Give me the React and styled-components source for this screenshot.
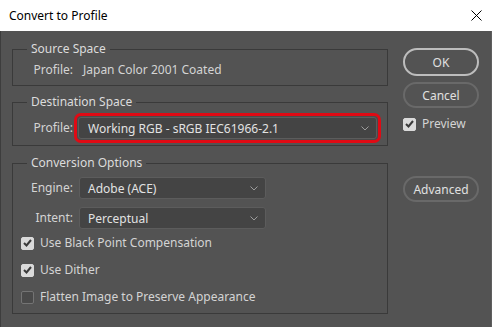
import styled, { createGlobalStyle } from "styled-components";

const GlobalStyle = createGlobalStyle`
  html, body {
    margin: 0;
    padding: 0;
    background: #fff;
  }
  body {
    font-family: "Noto Sans", "Open Sans", sans-serif;
    font-size: 12px;
  }
`;

const Window = styled.div`
  width: 492px;
  height: 327px;
  display: flex;
  flex-direction: column;
  overflow: hidden;
`;

const TitleBar = styled.div`
  height: 31px;
  flex: none;
  display: flex;
  align-items: center;
  justify-content: space-between;
  padding: 0 10px 0 9px;
  background: #fff;
  color: #000;
  font-size: 12px;
`;

const Body = styled.div`
  flex: 1;
  display: flex;
  background: #535353;
  border-left: 1px solid #3d3d3d;
  border-right: 1px solid #5f5f5f;
  padding: 10px 0 0 11px;
  color: #d4d4d4;
`;

const LeftCol = styled.div`
  width: 376px;
  display: flex;
  flex-direction: column;
`;

const RightCol = styled.div`
  width: 76px;
  margin-left: 15px;
  padding-top: 7px;
  display: flex;
  flex-direction: column;
`;

const Group = styled.fieldset`
  margin: ${(p) => p.$mt || 0}px 0 0;
  padding: 0 8px ${(p) => p.$pb}px;
  border: 1px solid #3a3a3a;
  min-width: 0;
`;

const Legend = styled.legend`
  margin-left: 6px;
  padding: 0 4px;
  line-height: 16px;
  color: #dcdcdc;
`;

const Row = styled.div`
  display: flex;
  align-items: center;
  margin-top: ${(p) => p.$mt}px;
  min-height: 16px;
`;

const Label = styled.span`
  width: 52px;
  text-align: right;
  line-height: 16px;
`;

const Value = styled.span`
  margin-left: 10px;
  line-height: 16px;
`;

const Select = styled.div`
  box-sizing: border-box;
  width: ${(p) => p.$w}px;
  height: 22px;
  margin-left: ${(p) => p.$ml}px;
  display: flex;
  align-items: center;
  justify-content: space-between;
  padding: 0 7px 0 ${(p) => p.$pl}px;
  background: #444;
  border: 1px solid #5c5c5c;
  border-radius: 3px;
  color: #e2e2e2;
  box-shadow: ${(p) =>
    p.$highlight ? "0 0 0 1px #4a4a4a, 0 0 0 4px #e00a14" : "none"};
`;

const Check = styled.div`
  box-sizing: border-box;
  width: 13px;
  height: 13px;
  flex: none;
  border-radius: 2px;
  display: flex;
  align-items: center;
  justify-content: center;
  background: ${(p) => (p.$on ? "#dadada" : "#4a4a4a")};
  border: 1px solid ${(p) => (p.$on ? "#dadada" : "#747474")};
`;

const CheckText = styled.span`
  margin-left: 6px;
  line-height: 16px;
`;

const CheckRow = styled.div`
  display: flex;
  align-items: center;
  height: 16px;
  margin-top: ${(p) => p.$mt}px;
`;

const Button = styled.div`
  box-sizing: border-box;
  height: ${(p) => (p.$primary ? 28 : 26)}px;
  margin-top: ${(p) => p.$mt}px;
  display: flex;
  align-items: center;
  justify-content: center;
  border: 2px solid ${(p) => (p.$primary ? "#bdbdbd" : "#696969")};
  border-radius: 14px;
  color: #e0e0e0;
  font-size: 12px;
`;

function Chevron() {
  return (
    <svg width="8" height="5" viewBox="0 0 8 5">
      <polyline points="0.5,0.5 4,4 7.5,0.5" fill="none" stroke="#9c9c9c" strokeWidth="1" />
    </svg>
  );
}

function Box({ on }) {
  return (
    <Check $on={on}>
      {on && (
        <svg width="9" height="8" viewBox="0 0 9 8">
          <polyline points="1,4 3.5,6.5 8,1" fill="none" stroke="#3a3a3a" strokeWidth="2" />
        </svg>
      )}
    </Check>
  );
}

export default function App() {
  return (
    <Window>
      <GlobalStyle />
      <TitleBar>
        <span>Convert to Profile</span>
        <svg width="11" height="11" viewBox="0 0 11 11">
          <path d="M0.5 0.5 L10.5 10.5 M10.5 0.5 L0.5 10.5" stroke="#000" strokeWidth="1" />
        </svg>
      </TitleBar>
      <Body>
        <LeftCol>
          <Group $pb={7}>
            <Legend>Source Space</Legend>
            <Row $mt={5}>
              <Label>Profile:</Label>
              <Value>Japan Color 2001 Coated</Value>
            </Row>
          </Group>
          <Group $mt={8} $pb={6}>
            <Legend>Destination Space</Legend>
            <Row $mt={7}>
              <Label>Profile:</Label>
              <Select $w={299} $ml={5} $pl={9} $highlight>
                <span>Working RGB - sRGB IEC61966-2.1</span>
                <Chevron />
              </Select>
            </Row>
          </Group>
          <Group $mt={9} $pb={8}>
            <Legend>Conversion Options</Legend>
            <Row $mt={6}>
              <Label>Engine:</Label>
              <Select $w={187} $ml={6} $pl={8}>
                <span>Adobe (ACE)</span>
                <Chevron />
              </Select>
            </Row>
            <Row $mt={8}>
              <Label>Intent:</Label>
              <Select $w={187} $ml={6} $pl={8}>
                <span>Perceptual</span>
                <Chevron />
              </Select>
            </Row>
            <CheckRow $mt={6}>
              <Box on />
              <CheckText>Use Black Point Compensation</CheckText>
            </CheckRow>
            <CheckRow $mt={11}>
              <Box on />
              <CheckText>Use Dither</CheckText>
            </CheckRow>
            <CheckRow $mt={11}>
              <Box />
              <CheckText>Flatten Image to Preserve Appearance</CheckText>
            </CheckRow>
          </Group>
        </LeftCol>
        <RightCol>
          <Button $primary $mt={0}>OK</Button>
          <Button $mt={6}>Cancel</Button>
          <CheckRow $mt={8}>
            <Box on />
            <CheckText>Preview</CheckText>
          </CheckRow>
          <Button $mt={44}>Advanced</Button>
        </RightCol>
      </Body>
    </Window>
  );
}
